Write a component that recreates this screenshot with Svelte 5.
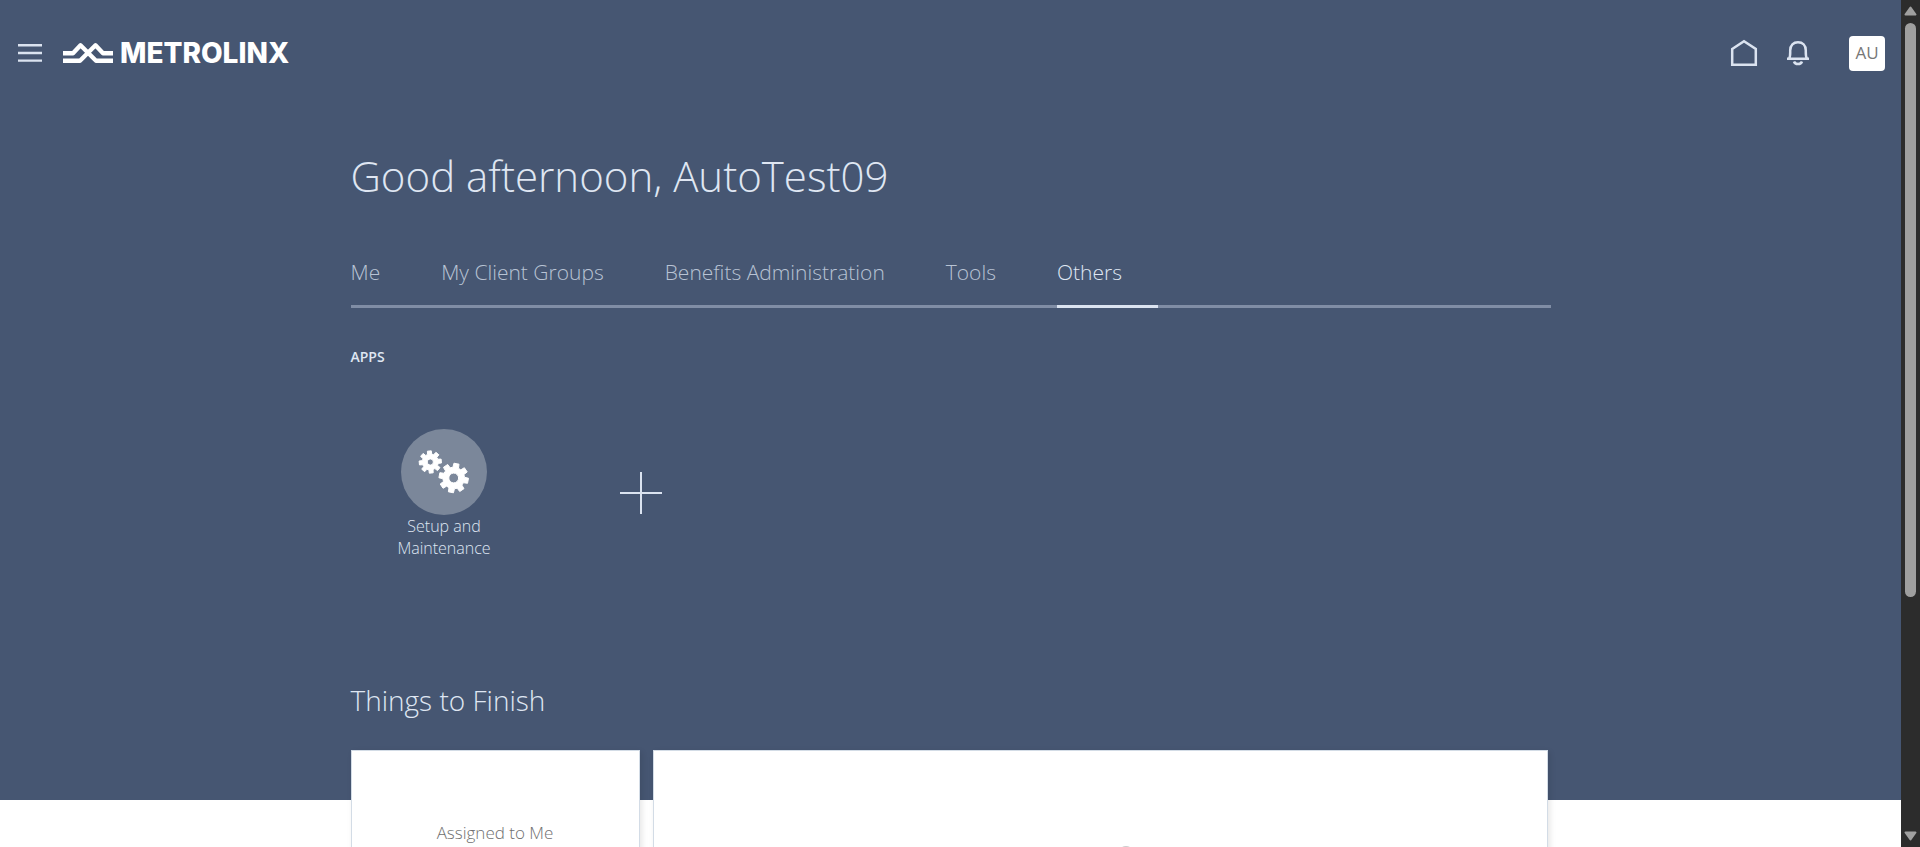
<script>
  const tabs = ['Me', 'My Client Groups', 'Benefits Administration', 'Tools', 'Others'];
  let active = $state('Others');

  // Outline of an eight-toothed gear with a round hole in the middle.
  function gear(cx, cy, outer, root, hole, turn) {
    const points = [];
    for (let i = 0; i < 8; i++) {
      const mid = turn + i * 45;
      for (const [offset, r] of [[-15, root], [-10, outer], [10, outer], [15, root]]) {
        const a = ((mid + offset) * Math.PI) / 180;
        points.push(`${(cx + r * Math.cos(a)).toFixed(2)} ${(cy + r * Math.sin(a)).toFixed(2)}`);
      }
    }
    return `M${points.join('L')}ZM${cx - hole} ${cy}a${hole} ${hole} 0 1 0 ${2 * hole} 0a${hole} ${hole} 0 1 0 ${-2 * hole} 0Z`;
  }
</script>

<div class="page">
  <div class="main">
    <header>
      <button class="icon menu" aria-label="Navigator">
        <svg width="24" height="20" viewBox="0 0 24 20"><path d="M0 2.3h24M0 10h24M0 17.6h24" stroke="#dbe3f0" stroke-width="2.4" /></svg>
      </button>
      <a class="logo" href="#home">
        <svg width="52" height="22" viewBox="0 0 52 22" fill="none" stroke="#fff" stroke-width="4.400" stroke-linejoin="round">
          <path d="M1 11.300h10L18.500 3.300 34 18.800h17" />
          <path d="M1 18.800h17L33.500 3.300 41 11.300h10" />
        </svg>
        <span>METROLINX</span>
      </a>
      <nav class="actions" aria-label="Global">
        <a class="icon" href="#home" aria-label="Home">
          <svg width="28" height="28" viewBox="0 0 28 28"><path d="M2.200 10 14 2.200 25.800 10V25.800H2.200Z" fill="none" stroke="#dbe3f0" stroke-width="2.500" /></svg>
        </a>
        <button class="icon" aria-label="Notifications">
          <svg width="24" height="26" viewBox="0 0 24 26" fill="none" stroke="#dbe3f0" stroke-width="2.500">
            <path d="M1 18.800h22M3 18.800C4.600 16.500 4.200 13 4.200 10.500 4.200 5 7.500 2.300 12 2.300s7.800 2.700 7.800 8.200c0 2.500-.4 6 1.200 8.300M8 21.500c.6 1.800 2 2.500 4 2.500s3.400-.7 4-2.500" />
          </svg>
        </button>
        <button class="avatar">AU</button>
      </nav>
    </header>

    <main class="content">
      <h1>Good afternoon, AutoTest09</h1>

      <div class="tabs" role="tablist">
        {#each tabs as tab}
          <button role="tab" aria-selected={active === tab} class:active={active === tab} onclick={() => (active = tab)}>{tab}</button>
        {/each}
      </div>

      <h2 class="apps-title">APPS</h2>
      <div class="apps">
        <a class="app" href="#setup">
          <svg width="86" height="86" viewBox="0 0 86 86">
            <circle cx="43" cy="43" r="43" fill="#7b879a" />
            <g fill="#fff" stroke="#fff" stroke-width="1" stroke-linejoin="round" fill-rule="evenodd">
              <path d={gear(29.3, 33, 11.2, 8, 3.1, -50)} />
              <path d={gear(52.7, 49, 14.8, 10.8, 4.9, -79)} />
            </g>
          </svg>
          <span>Setup and Maintenance</span>
        </a>
        <button class="app add" aria-label="Add app">
          <svg width="42" height="42" viewBox="0 0 42 42"><path d="M21 0v42M0 21h42" stroke="#dbe3f0" stroke-width="2" /></svg>
        </button>
      </div>

      <h2 class="finish-title">Things to Finish</h2>
      <div class="cards">
        <section class="card">Assigned to Me</section>
        <section class="card list"><div class="loader"></div></section>
      </div>
    </main>
  </div>

  <div class="scrollbar" aria-hidden="true">
    <svg width="13" height="10" viewBox="0 0 13 10"><path d="M6.500 1.500 11.500 8.500h-10Z" fill="#9f9f9f" stroke="#9f9f9f" stroke-width="2" stroke-linejoin="round" /></svg>
    <div class="track"><div class="thumb"></div></div>
    <svg width="13" height="10" viewBox="0 0 13 10"><path d="M6.500 8.500 11.500 1.500h-10Z" fill="#9f9f9f" stroke="#9f9f9f" stroke-width="2" stroke-linejoin="round" /></svg>
  </div>
</div>

<style>
  :global(body) {
    margin: 0;
    font-family: 'Open Sans', 'Noto Sans', sans-serif;
    font-weight: 300;
    color: #dfe6f2;
  }
  .page {
    display: flex;
    height: 100vh;
    overflow: hidden;
  }
  .main {
    flex: 1;
    min-width: 0;
    overflow: hidden;
    background: linear-gradient(#465672 800px, #fff 800px);
  }
  button {
    padding: 0;
    border: 0;
    background: none;
    font: inherit;
    color: inherit;
    cursor: pointer;
  }
  a {
    color: inherit;
    text-decoration: none;
  }
  svg {
    display: block;
  }
  header {
    display: flex;
    align-items: center;
    height: 106px;
    padding: 0 16px 0 18px;
  }
  .logo {
    display: flex;
    align-items: center;
    gap: 6px;
    margin-left: 20px;
    color: #fff;
    font: 800 28px/32px Inter, sans-serif;
  }
  .actions {
    display: flex;
    align-items: center;
    gap: 28px;
    margin-left: auto;
  }
  .avatar {
    width: 36px;
    height: 35px;
    margin-left: 11px;
    border-radius: 4px;
    background: #fff;
    color: #777;
    font-size: 17px;
    line-height: 24px;
    font-weight: 400;
  }
  .content {
    max-width: 1200px;
    margin: 0 auto;
  }
  h1,
  h2 {
    margin: 0;
    font-weight: 300;
  }
  h1 {
    padding-top: 38px;
    font-size: 42px;
    line-height: 64px;
  }
  .tabs {
    display: flex;
    gap: 25px;
    margin-top: 40px;
    border-bottom: 3px solid #808da5;
  }
  .tabs button {
    height: 60px;
    margin-bottom: -3px;
    padding: 0 36px 10px 0;
    border-bottom: 3px solid transparent;
    color: #b8c3d4;
    font-size: 21px;
    white-space: nowrap;
  }
  .tabs .active {
    border-color: #dbe3f0;
    color: #dfe6f2;
  }
  .apps-title {
    margin-top: 38px;
    font-size: 14px;
    line-height: 22px;
    font-weight: 600;
  }
  .apps {
    display: flex;
    align-items: flex-start;
    gap: 10px;
    box-sizing: border-box;
    height: 312px;
    padding-top: 61px;
  }
  .app {
    display: flex;
    flex-direction: column;
    align-items: center;
    width: 187px;
    text-align: center;
    font-size: 16px;
    line-height: 22px;
  }
  .app span {
    width: 120px;
  }
  .add {
    padding-top: 43px;
  }
  .finish-title {
    font-size: 28px;
    line-height: 40px;
  }
  .cards {
    display: grid;
    grid-template-columns: 289px 1fr;
    gap: 13px;
    margin: 30px 3px 0 0;
  }
  .card {
    box-sizing: border-box;
    height: 330px;
    padding-top: 70px;
    border: 1px solid #d3dce6;
    background: #fff;
    box-shadow: 2px 2px 6px rgba(0, 0, 0, 0.1);
    color: #707070;
    font-size: 17px;
    line-height: 24px;
    text-align: center;
  }
  .list {
    padding-left: 52px;
  }
  .loader {
    width: 16px;
    height: 16px;
    margin: 25px auto 0;
    border-radius: 50%;
    background: #ccc;
  }
  .scrollbar {
    display: flex;
    flex-direction: column;
    align-items: center;
    box-sizing: border-box;
    width: 19px;
    padding: 6px 0;
    background: #2c2c2c;
  }
  .track {
    flex: 1;
    padding: 7px 0;
  }
  .thumb {
    width: 11px;
    height: calc(72% - 3px);
    border-radius: 6px;
    background: #9f9f9f;
  }
</style>
